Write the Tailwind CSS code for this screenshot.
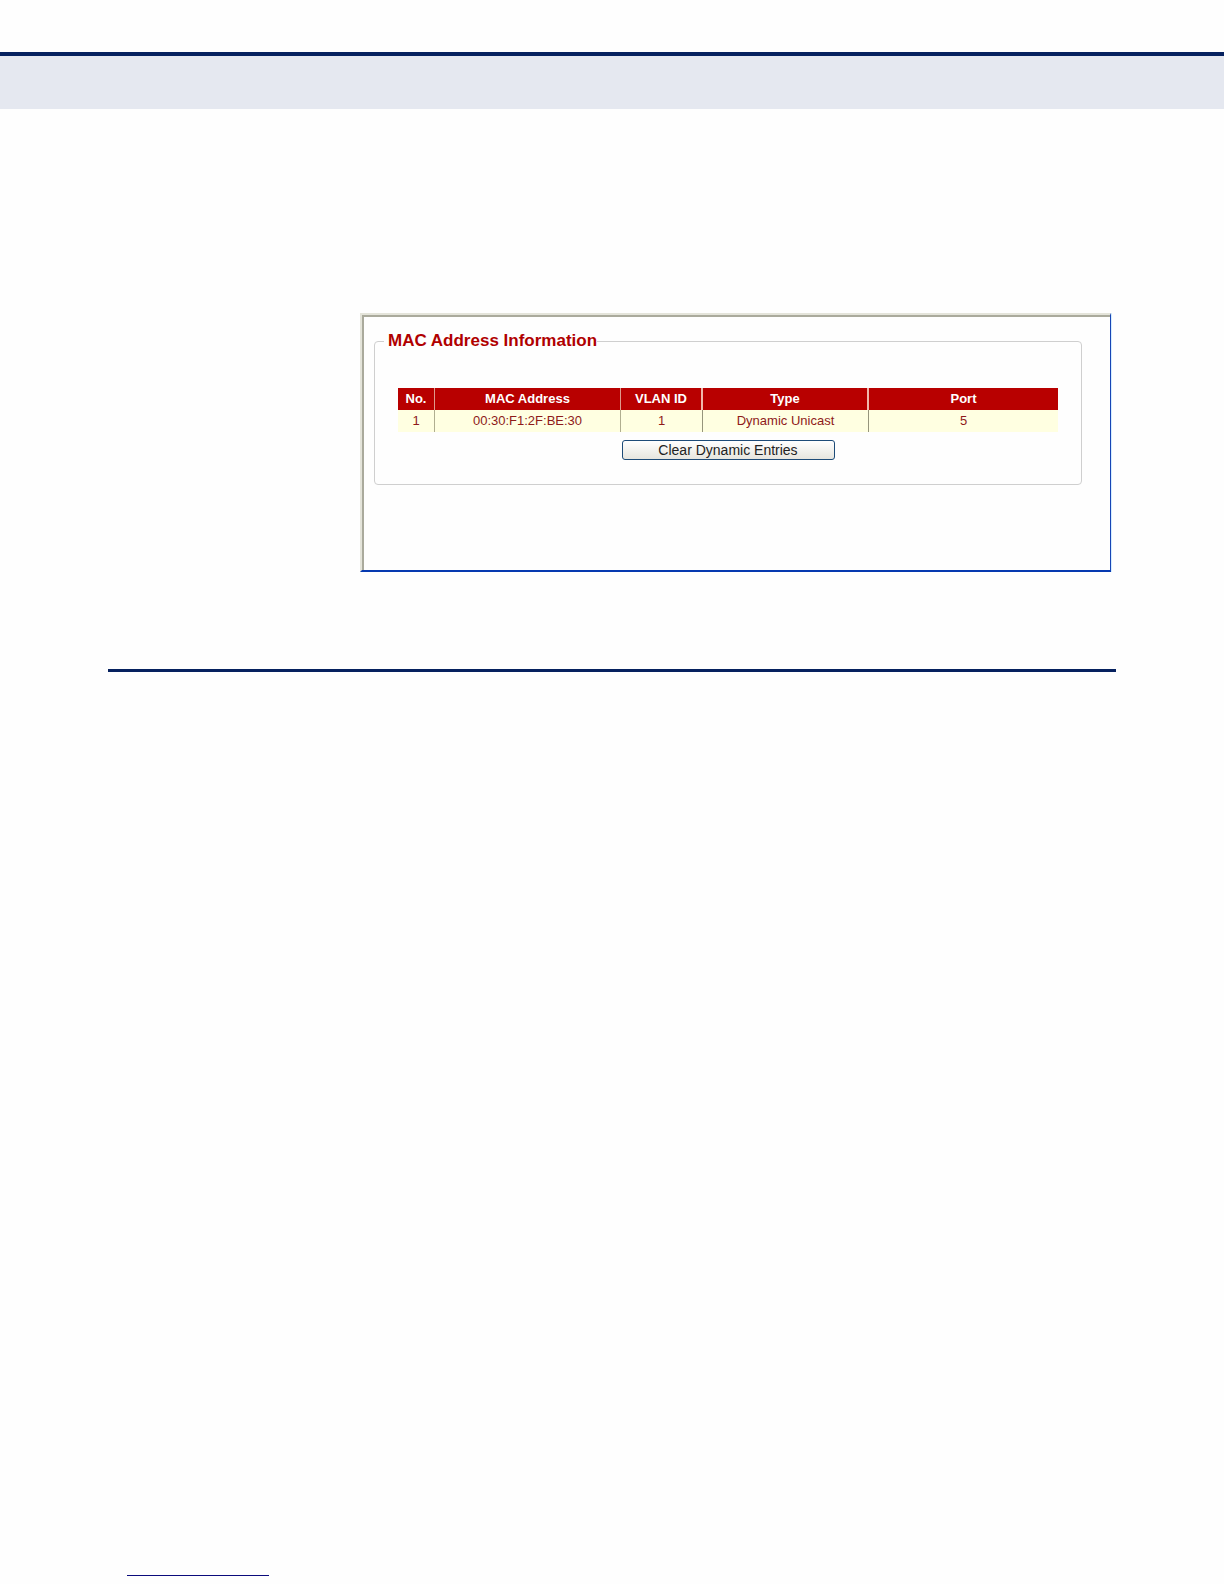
<!DOCTYPE html>
<html lang="en">
<head>
<meta charset="utf-8">
<title>MAC Address Information</title>
<script src="https://cdn.jsdelivr.net/npm/@tailwindcss/browser@4"></script>
</head>
<body class="flex min-h-screen flex-col bg-[#fefefe] font-['Liberation_Sans',Arial,sans-serif]">
  <header class="mt-13 h-[57px] border-t-4 border-[#06215f] bg-[#e5e8f0]"></header>

  <main class="flex-1 pl-[108px] pr-[108px] pt-[204px]">
    <section class="ml-[252px] mr-[5px] border-l-2 border-t-2 border-[#e4e4da] border-r border-b-2 border-r-[#1745b5] border-b-[#0639b0] shadow-[1px_0_0_#d4edff]">
      <div class="min-h-[255px] border-l-2 border-t-2 border-[#aaaa9c] pl-2.5 pr-7 pt-3.5">
        <fieldset class="rounded border border-[#cfcfcf] pb-6 pl-[9px] pr-[23px]">
          <legend class="pl-1 text-[17px] leading-5 font-bold text-[#b00000]">MAC Address Information</legend>
          <div class="pl-3.5 pt-[37px]">
            <table class="w-full table-fixed border-separate border-spacing-0 text-center text-[13px] leading-5">
              <colgroup>
                <col class="w-[37px]"><col class="w-[186px]"><col class="w-[82px]"><col class="w-[166px]"><col>
              </colgroup>
              <thead class="bg-[#b80000] text-white">
                <tr class="h-[22px]">
                  <th scope="col" class="border-r border-[#de9a8c]">No.</th>
                  <th scope="col" class="border-r border-[#de9a8c]">MAC Address</th>
                  <th scope="col" class="border-r-2 border-[#f0b8ac]">VLAN ID</th>
                  <th scope="col" class="border-r-2 border-[#f0b8ac]">Type</th>
                  <th scope="col">Port</th>
                </tr>
              </thead>
              <tbody class="bg-[#ffffe1] text-[#8e1a1a]">
                <tr class="h-[22px]">
                  <td class="border-r border-[#b0ae90]">1</td>
                  <td class="border-r border-[#b0ae90]">00:30:F1:2F:BE:30</td>
                  <td class="border-r border-[#96957c]">1</td>
                  <td class="border-r border-[#96957c]">Dynamic Unicast</td>
                  <td>5</td>
                </tr>
              </tbody>
            </table>
            <div class="flex justify-center pt-2">
              <button type="button" class="h-5 w-[213px] rounded-[3px] border border-[#1d4b78] bg-linear-to-b from-white to-[#e6e5de] text-[14px] leading-4 text-[#222]">Clear Dynamic Entries</button>
            </div>
          </div>
        </fieldset>
      </div>
    </section>
    <hr class="mt-[97px] border-t-3 border-[#06215f]">
  </main>

  <footer class="pb-2 pl-[127px]">
    <div class="w-[142px] border-t border-[#0b0b7c]"></div>
  </footer>
</body>
</html>
